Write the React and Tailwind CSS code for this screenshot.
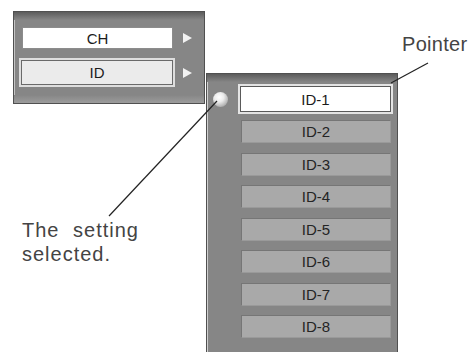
import React from "react";

const ids = ["ID-1", "ID-2", "ID-3", "ID-4", "ID-5", "ID-6", "ID-7", "ID-8"];

// small white triangle used as submenu arrow
const Arrow = () => (
  <svg width="10" height="10" viewBox="0 0 10 10" className="shrink-0">
    <polygon points="0,0 9,5 0,10" fill="#f2f2f2" />
  </svg>
);

const HeaderBand = () => (
  <div className="h-[8px] bg-gradient-to-b from-[#5c5c5c] to-[#868686]" />
);

export default function App() {
  return (
    <div
      className="relative w-[471px] h-[352px] overflow-hidden bg-white text-[#1c1c1c]"
      style={{ fontFamily: '"Liberation Sans", Arial, sans-serif' }}
    >
      {/* Top menu: CH / ID */}
      <div className="absolute left-[13px] top-[11px] w-[192px] h-[93px] flex flex-col border border-[#505050] bg-[#868686] shadow-[inset_1px_0_0_#c4c4c4]">
        <HeaderBand />
        <div className="flex items-center mt-[7px] ml-[8px] gap-[10px]">
          <div className="w-[151px] h-[22px] flex items-center justify-center bg-white border border-[#8c8c8c] text-[15px] leading-none">
            CH
          </div>
          <Arrow />
        </div>
        <div className="flex items-center mt-[9px] ml-[5px] gap-[8px]">
          <div className="w-[156px] h-[29px] border-2 border-[#dedede] bg-[#dedede]">
            <div className="w-full h-full flex items-center justify-center bg-[#ebebeb] border border-[#6a6a6a] text-[15px] leading-none">
              ID
            </div>
          </div>
          <Arrow />
        </div>
        <div className="mt-auto h-[8px] bg-gradient-to-b from-[#868686] to-[#9c9c9c]" />
      </div>

      {/* ID list */}
      <div className="absolute left-[206px] top-[73px] w-[192px] h-[300px] flex flex-col border border-[#505050] bg-[#868686] shadow-[inset_1px_0_0_#d0d0d0]">
        <HeaderBand />
        <div className="flex flex-col pt-[1px]">
          {ids.map((id, i) => (
            <div key={id} className="h-[32.5px] flex items-center">
              <div className="w-[34px] flex items-center">
                {i === 0 && (
                  <div className="ml-[6px] w-[15px] h-[15px] rounded-full bg-[radial-gradient(circle_at_40%_35%,#ffffff_0%,#ececec_35%,#b4b4b4_70%,#8e8e8e_100%)]" />
                )}
              </div>
              {i === 0 ? (
                <div className="-ml-[3px] w-[155px] h-[30px] border-2 border-[#e4e4e4] bg-[#e4e4e4]">
                  <div className="w-full h-full flex items-center justify-center bg-white border border-[#5a5a5a] text-[15px] leading-none">
                    {id}
                  </div>
                </div>
              ) : (
                <div className="w-[150px] h-[23px] flex items-center justify-center bg-[#a9a9a9] border border-[#767676] border-b-[#9a9a9a] border-r-[#9a9a9a] text-[15px] leading-none text-[#242424]">
                  {id}
                </div>
              )}
            </div>
          ))}
        </div>
      </div>

      {/* Callout texts */}
      <div className="absolute left-[402px] top-[32px] text-[20px] leading-[24px] tracking-[0.3px] text-[#444]">
        Pointer
      </div>
      <div className="absolute left-[22px] top-[218px] text-[20px] leading-[24px] tracking-[1px] [word-spacing:7px] text-[#444]">
        The setting
        <br />
        selected.
      </div>

      {/* Leader lines */}
      <svg className="absolute inset-0 pointer-events-none" width="471" height="352">
        <line x1="217" y1="101" x2="109" y2="216" stroke="#222" strokeWidth="1.2" />
        <line x1="428" y1="63" x2="391" y2="83" stroke="#222" strokeWidth="1.2" />
      </svg>
    </div>
  );
}
